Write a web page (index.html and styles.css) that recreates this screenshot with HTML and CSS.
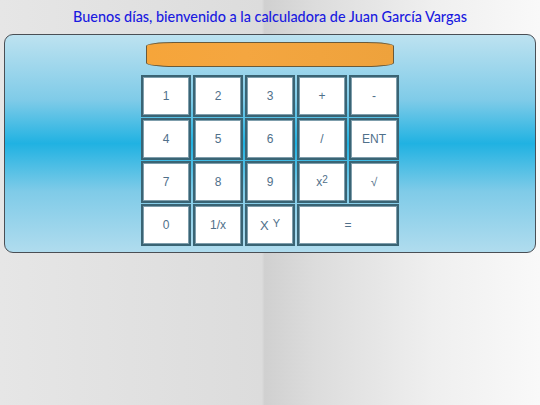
FILE: index.html
```html
<!DOCTYPE html>
<html lang="es">
<head>
<meta charset="utf-8">
<title>Calculadora</title>
<link rel="stylesheet" href="styles.css">
</head>
<body>
<h1 class="title">Buenos días, bienvenido a la calculadora de Juan García Vargas</h1>
<div class="panel">
  <div class="display"></div>
  <div class="keys">
    <div class="key">1</div>
    <div class="key">2</div>
    <div class="key">3</div>
    <div class="key">+</div>
    <div class="key">-</div>
    <div class="key">4</div>
    <div class="key">5</div>
    <div class="key">6</div>
    <div class="key">/</div>
    <div class="key">ENT</div>
    <div class="key">7</div>
    <div class="key">8</div>
    <div class="key">9</div>
    <div class="key">x<sup>2</sup></div>
    <div class="key">√</div>
    <div class="key">0</div>
    <div class="key">1/x</div>
    <div class="key xy">X<sup>Y</sup></div>
    <div class="key wide">=</div>
  </div>
</div>
</body>
</html>
```
FILE: styles.css
```css
html, body {
  margin: 0;
  padding: 0;
  height: 100%;
}
body {
  background: linear-gradient(to right, #e6e6e6 0%, #dcdcdc 48.5%, #d0d0d0 49%, #dcdcdc 58%, #efefef 80%, #f9f9f9 100%);
  font-family: "Liberation Sans", Arial, sans-serif;
  padding: 8px 4px 0;
  box-sizing: border-box;
}
.title {
  margin: 0 0 8px;
  height: 18px;
  line-height: 18px;
  text-align: center;
  font-family: Lato, "Open Sans", sans-serif;
  font-weight: 500;
  font-size: 14.4px;
  color: #1a1ae0;
}
.panel {
  height: 219px;
  box-sizing: border-box;
  border: 1px solid #4a4f55;
  border-radius: 9px;
  background: linear-gradient(to bottom, #bde2f0 0%, #7fcbe8 30%, #20b2e2 50%, #7fcbe8 72%, #b0dcee 100%);
  padding-top: 7px;
  display: flex;
  flex-direction: column;
  align-items: center;
}
.display {
  width: 248px;
  height: 25px;
  box-sizing: border-box;
  background: linear-gradient(to right, #f6a53a, #f4a640 40%, #eea23c);
  border: 1px solid #6a5a3a;
  border-radius: 28px / 4px;
}
.keys {
  margin-top: 8px;
  display: grid;
  grid-template-columns: repeat(5, 50px);
  grid-auto-rows: 42px;
  gap: 1px 2px;
}
.key {
  box-sizing: border-box;
  background: #ffffff;
  border: 2px solid #3a6474;
  box-shadow: inset 1px 1px 0 #7f9eac, inset -1px -1px 0 #7f9eac;
  display: flex;
  align-items: center;
  justify-content: center;
  color: #50708a;
  font-size: 12px;
}
.key sup {
  font-size: 10px;
  line-height: 0;
  position: relative;
  top: -2px;
}
.xy {
  font-size: 13px;
}
.xy sup {
  margin-left: 4px;
  font-size: 11px;
}
.wide {
  grid-column: span 2;
}
```
